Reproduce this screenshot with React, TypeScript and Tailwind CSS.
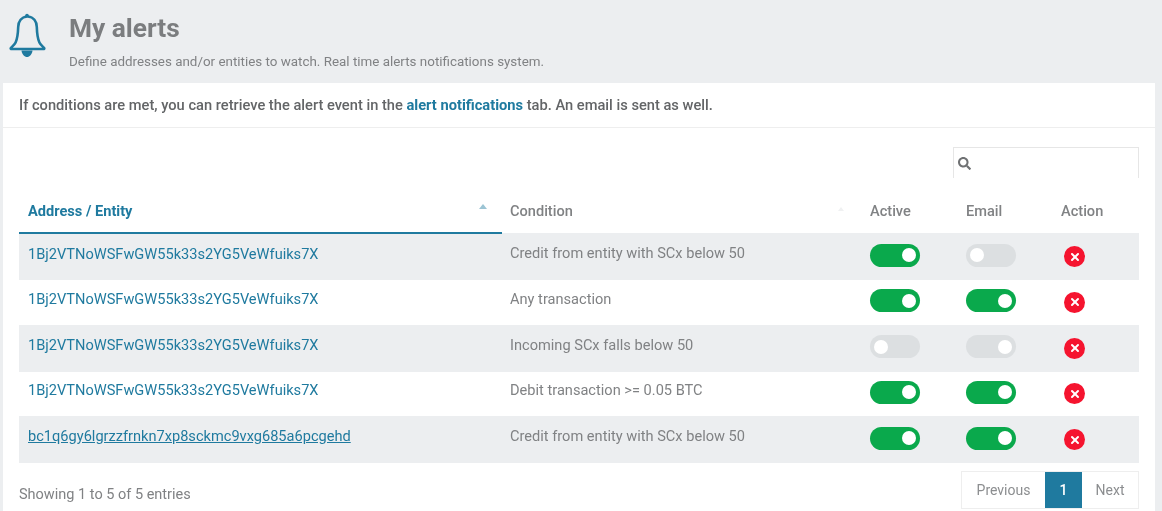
import { FaSearch } from "react-icons/fa";
import { X } from "lucide-react";

const rows = [
  { address: "1Bj2VTNoWSFwGW55k33s2YG5VeWfuiks7X", condition: "Credit from entity with SCx below 50", active: true, email: false },
  { address: "1Bj2VTNoWSFwGW55k33s2YG5VeWfuiks7X", condition: "Any transaction", active: true, email: true },
  { address: "1Bj2VTNoWSFwGW55k33s2YG5VeWfuiks7X", condition: "Incoming SCx falls below 50", active: false, email: false, knobRight: true },
  { address: "1Bj2VTNoWSFwGW55k33s2YG5VeWfuiks7X", condition: "Debit transaction >= 0.05 BTC", active: true, email: true },
  { address: "bc1q6gy6lgrzzfrnkn7xp8sckmc9vxg685a6pcgehd", condition: "Credit from entity with SCx below 50", active: true, email: true, underline: true },
];

const Toggle = ({ on, knobRight }: { on: boolean; knobRight?: boolean }) => (
  <div
    className={`flex h-[23px] w-[50px] items-center rounded-full px-[4px] ${on ? "justify-end bg-[#0aa94c]" : "bg-[#dcdfe1]"} ${knobRight ? "justify-end" : ""}`}
  >
    <div className="h-[14px] w-[14px] rounded-full bg-white" />
  </div>
);

const BellIcon = () => (
  <svg width="40" height="46" viewBox="0 0 40 46" fill="none" className="shrink-0">
    <path
      d="M18 3.5c-5.6.6-8.6 5-8.8 10.500-.2 6.500-.8 11.500-2.600 15.500-1 2.200-3 3.800-4.600 5.300-.6.7-.2 1.200.8 1.200h31.400c1 0 1.400-.5.8-1.200-1.600-1.500-3.600-3.100-4.600-5.300-1.800-4-2.400-9-2.600-15.500-.2-5.500-3.200-9.900-8.800-10.500z"
      stroke="#1f7a9f"
      strokeWidth="2.6"
      strokeLinejoin="round"
    />
    <circle cx="18" cy="2.500" r="1.800" fill="#1f7a9f" />
    <path d="M12.500 37.500c.5 4 3 6.500 5.500 6.500s5-2.500 5.500-6.500z" fill="#1f7a9f" />
  </svg>
);

export default function App() {
  return (
    <div className="h-[511px] w-[1162px] overflow-hidden bg-[#eceef0] font-['Roboto',sans-serif] blur-[0.6px]">
      {/* Header */}
      <div className="flex h-[83px] pl-[9px] pt-[13px]">
        <BellIcon />
        <div className="ml-[20px]">
          <h1 className="text-[26.3px] leading-[30px] font-bold text-[#7b7d7f]">My alerts</h1>
          <p className="mt-[11px] text-[13.4px] leading-[16px] text-[#808284]">
            Define addresses and/or entities to watch. Real time alerts notifications system.
          </p>
        </div>
      </div>

      {/* Card */}
      <div className="ml-[3px] h-[428px] w-[1152px] bg-white">
        <div className="flex h-[45px] items-center border-b border-[#eeeeee] pt-[2px] pl-[16px] text-[14.66px] font-medium text-[#636567]">
          <span>
            If conditions are met, you can retrieve the alert event in the{" "}
            <a className="font-bold text-[#1f7a9f]">alert notifications</a> tab. An email is sent as well.
          </span>
        </div>

        <div className="px-[16px]">
          <div className="flex justify-end pt-[19px]">
            <div className="flex h-[31px] w-[186px] items-center border border-b-0 border-[#e6e6e6] pl-[4px] text-[#6f7173]">
              <FaSearch size={13} />
            </div>
          </div>

          <table className="w-[1120px] table-fixed border-collapse text-[14.6px]">
            <colgroup>
              <col className="w-[483px]" />
              <col className="w-[360px]" />
              <col className="w-[96px]" />
              <col className="w-[95px]" />
              <col className="w-[86px]" />
            </colgroup>
            <thead>
              <tr className="h-[55px] text-left text-[#808284]">
                <th className="relative border-b-2 border-[#1f7a9f] pt-[14px] pl-[9px] font-bold text-[#1f7a9f]">
                  Address / Entity
                  <span className="absolute top-[26px] right-[15px] h-0 w-0 border-x-[4px] border-b-[5px] border-x-transparent border-b-[#9cc4d4]" />
                </th>
                <th className="relative pt-[12px] pl-[8px] font-medium">
                  Condition
                  <span className="absolute top-[29px] right-[18px] h-0 w-0 border-x-[3px] border-b-[4px] border-x-transparent border-b-[#f0f1f2]" />
                </th>
                <th className="pt-[12px] pl-[8px] font-medium">Active</th>
                <th className="pt-[12px] pl-[8px] font-medium">Email</th>
                <th className="pt-[12px] pl-[8px] font-medium">Action</th>
              </tr>
            </thead>
            <tbody>
              {rows.map((row, i) => (
                <tr key={i} className={i % 2 === 0 ? "h-[47px] bg-[#eceef0]" : "h-[44.5px] bg-white"}>
                  <td className="pb-[5px] pl-[9px]">
                    <a className={`text-[#1f7a9f] ${row.underline ? "underline" : ""}`}>{row.address}</a>
                  </td>
                  <td className="pb-[5px] pl-[8px] text-[#808284]">{row.condition}</td>
                  <td className="pb-[3px] pl-[8px]">
                    <Toggle on={row.active} />
                  </td>
                  <td className="pb-[3px] pl-[8px]">
                    <Toggle on={row.email} knobRight={row.knobRight} />
                  </td>
                  <td className="pl-[11px]">
                    <div className="flex h-[21px] w-[21px] items-center justify-center rounded-full bg-[#f5142f] text-white">
                      <X size={12} strokeWidth={4} />
                    </div>
                  </td>
                </tr>
              ))}
            </tbody>
          </table>

          {/* Footer */}
          <div className="mt-[8px] flex justify-between">
            <span className="pt-[13px] text-[14.5px] text-[#808284]">Showing 1 to 5 of 5 entries</span>
            <div className="flex h-[38px] w-[178px] border border-[#eeeeee] text-[14px] text-[#8c8e90]">
              <button className="w-[83px]">Previous</button>
              <button className="w-[37px] bg-[#1f7a9f] font-medium text-white">1</button>
              <button className="flex-1">Next</button>
            </div>
          </div>
        </div>
      </div>
    </div>
  );
}
